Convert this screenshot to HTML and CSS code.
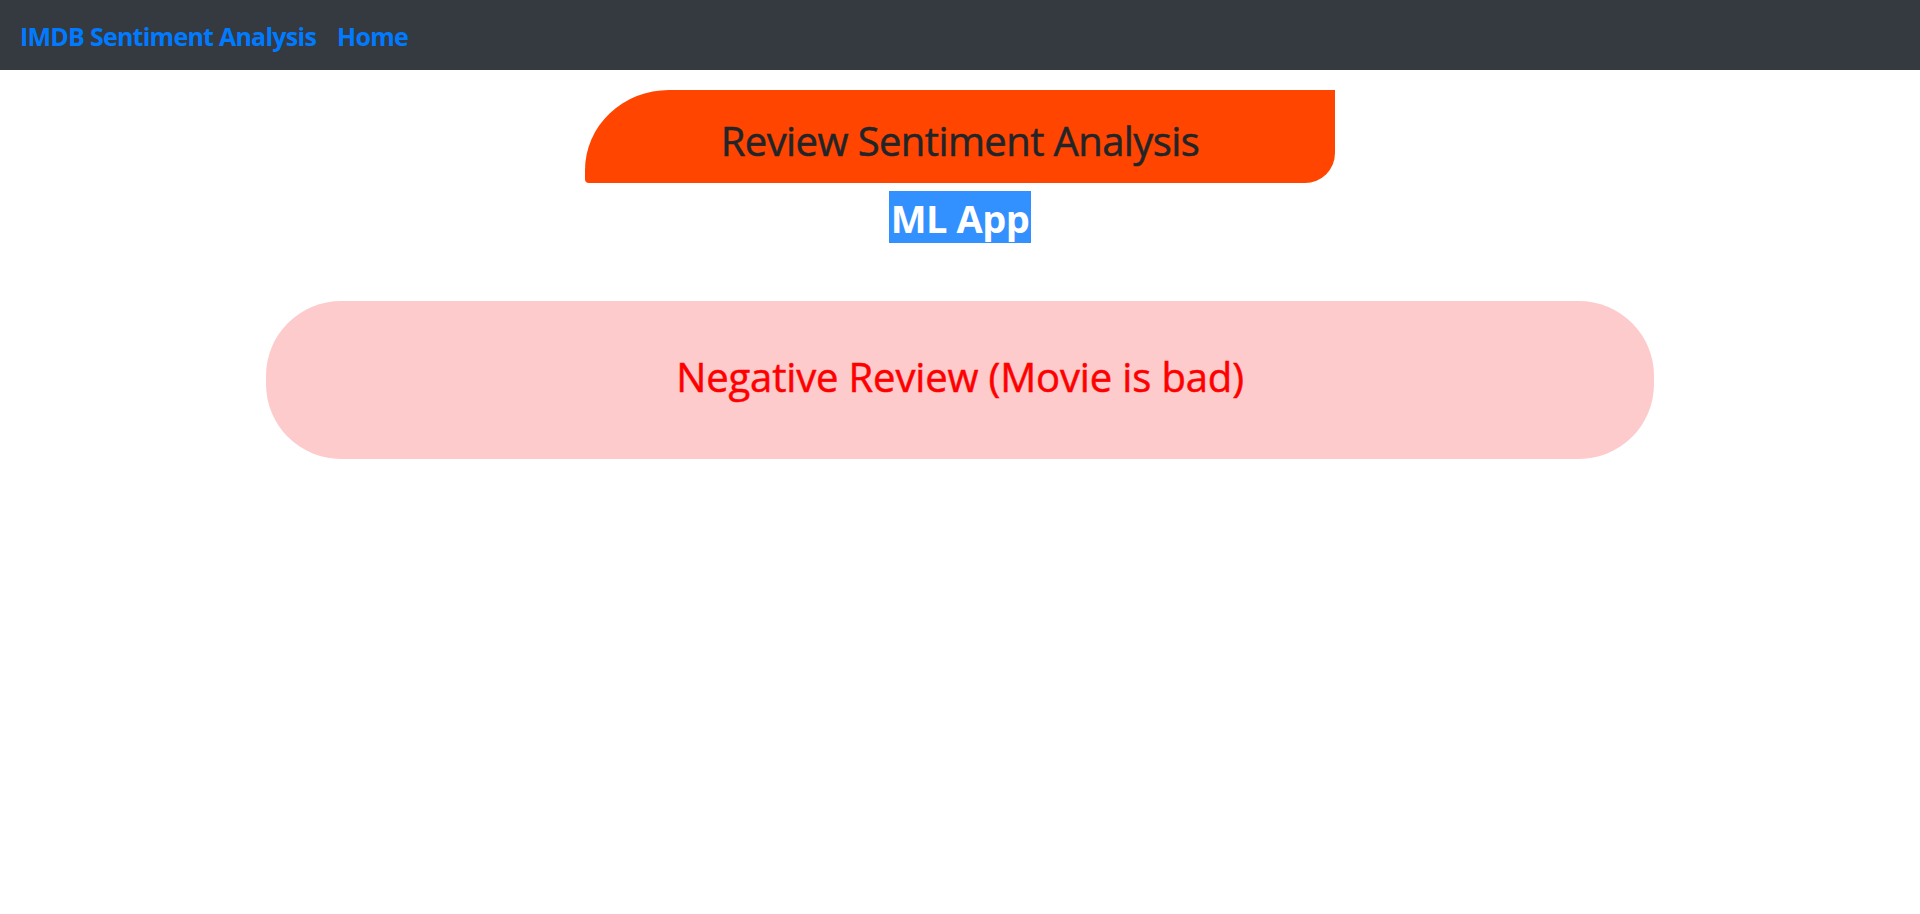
FILE: index.html
```html
<!DOCTYPE html>
<html lang="en">
<head>
<meta charset="utf-8">
<title>IMDB Sentiment Analysis</title>
<link rel="stylesheet" href="styles.css">
</head>
<body>
<nav class="navbar">
  <a class="brand" href="#">IMDB Sentiment Analysis</a>
  <a class="nav-link" href="#">Home</a>
</nav>
<main class="container">
  <div class="title-box"><h2 class="title">Review Sentiment Analysis</h2></div>
  <div class="subtitle"><span class="sub-mark">ML App</span></div>
  <div class="result"><h2 class="result-text">Negative Review (Movie is bad)</h2></div>
</main>
</body>
</html>
```

FILE: styles.css
```css
* { box-sizing: border-box; }
body {
  margin: 0;
  background: #ffffff;
  font-family: "Open Sans", "Noto Sans", sans-serif;
  color: #212529;
}
.navbar {
  height: 70px;
  background: #343a40;
  display: flex;
  align-items: center;
  padding: 2px 20px 0;
}
.brand, .nav-link {
  color: #007bff;
  text-decoration: none;
  font-weight: 700;
  font-size: 25px;
  letter-spacing: -0.75px;
}
.brand { margin-right: 21px; }
.container {
  width: 1388px;
  margin: 0 auto;
}
.title-box {
  width: 750px;
  height: 93px;
  margin: 20px auto 0;
  background: #ff4500;
  border-radius: 84px 0 30px 4px / 80px 0 30px 4px;
  display: flex;
  align-items: center;
  justify-content: center;
}
.title {
  margin: 0;
  font-size: 40px;
  font-weight: 500;
  color: #212529;
  letter-spacing: -0.6px;
  padding-top: 8px;
  -webkit-text-stroke: 0.5px #212529;
}
.subtitle {
  margin-top: 8px;
  text-align: center;
  height: 52px;
}
.sub-mark {
  display: inline-block;
  background: #3390ff;
  color: #ffffff;
  font-weight: 700;
  font-size: 38px;
  line-height: 49px;
  padding: 3px 2px 0;
  letter-spacing: -0.5px;
}
.result {
  margin-top: 58px;
  height: 158px;
  background: #fdcbcb;
  border-radius: 75px;
  display: flex;
  align-items: center;
  justify-content: center;
}
.result-text {
  margin: 0;
  font-size: 40px;
  font-weight: 500;
  color: #ff0000;
  letter-spacing: -0.15px;
  padding-bottom: 8px;
  -webkit-text-stroke: 0.5px #ff0000;
}
```
